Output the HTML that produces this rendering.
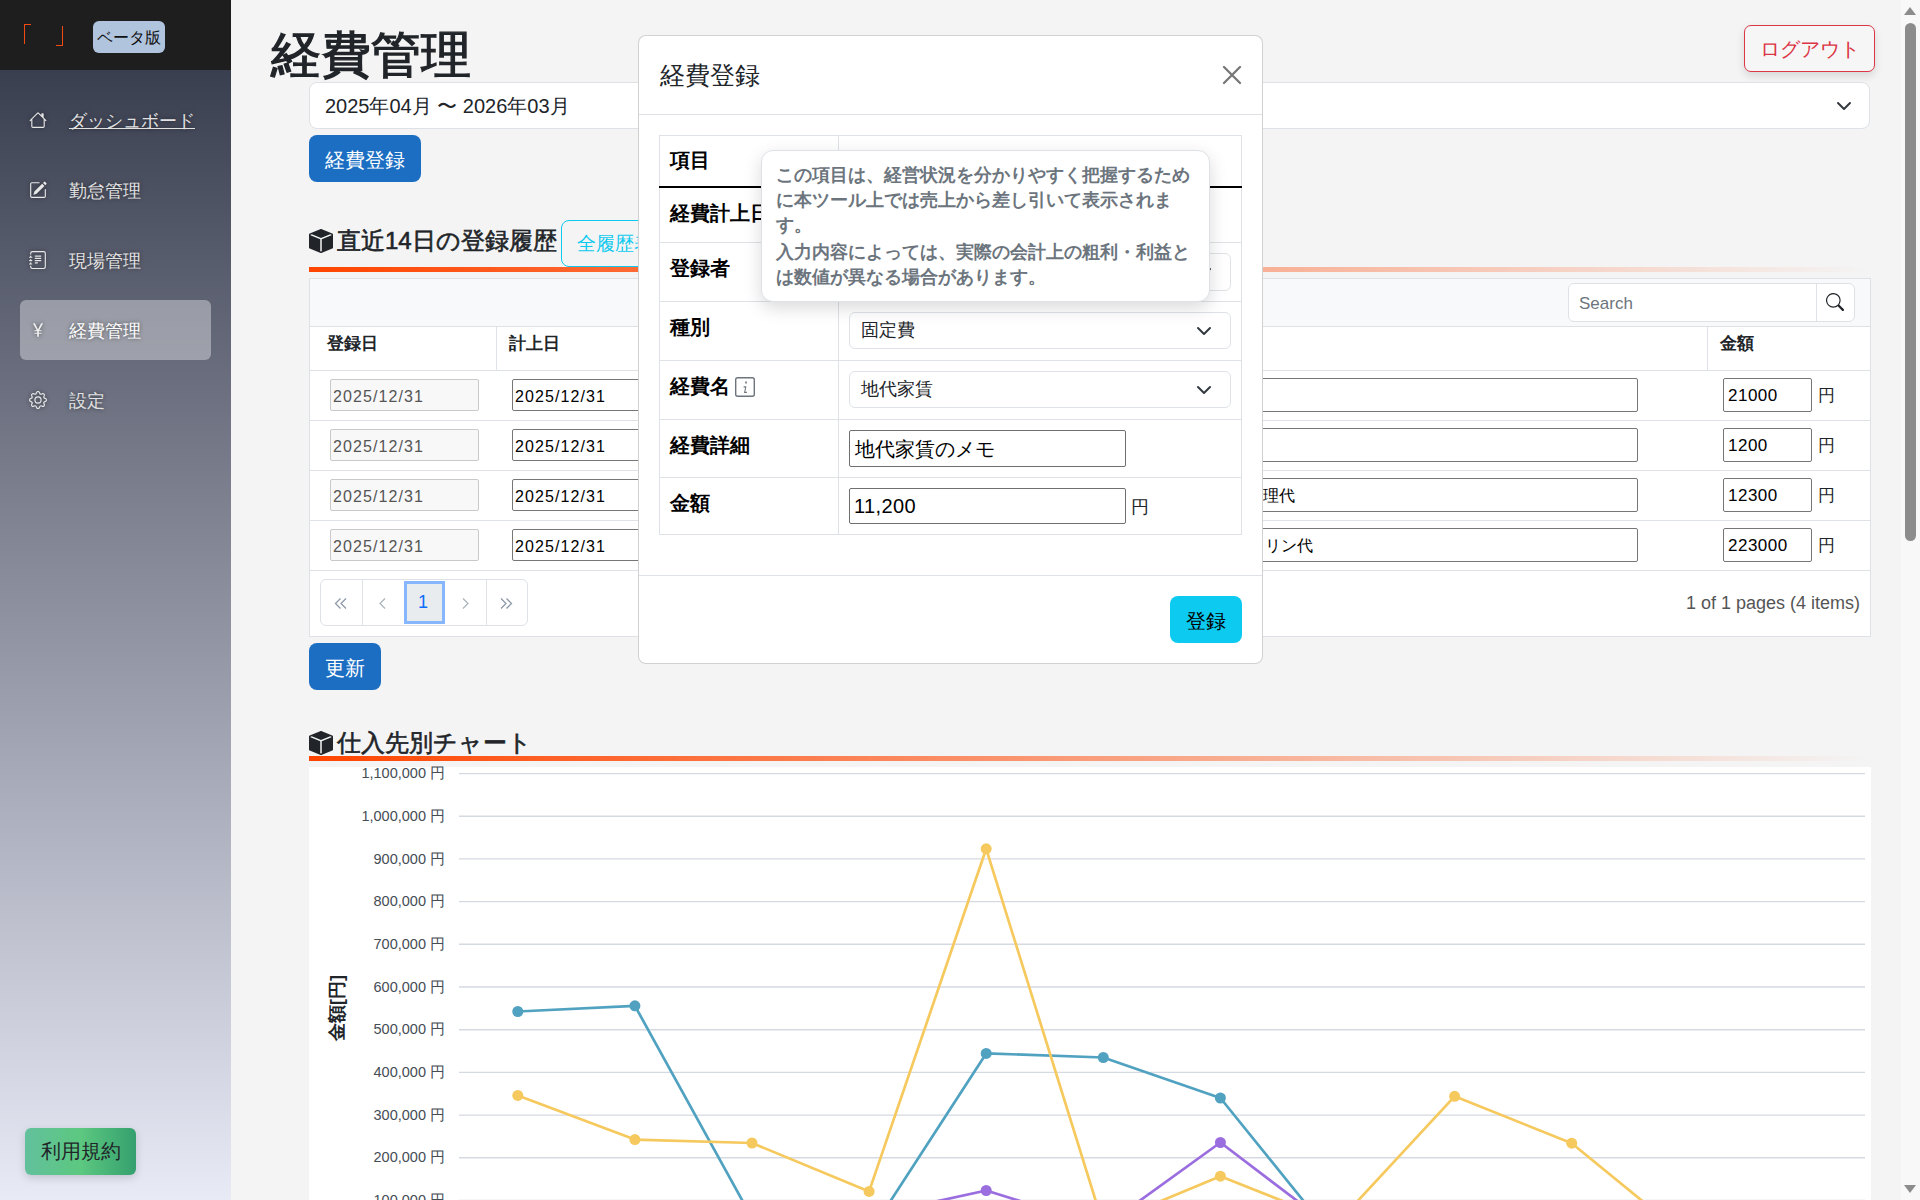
<!DOCTYPE html>
<html lang="ja"><head><meta charset="utf-8"><title>経費管理</title>
<style>
*{box-sizing:border-box}
html,body{margin:0;padding:0;width:1920px;height:1200px;overflow:hidden}
body{font-family:"Liberation Sans",sans-serif;background:#f4f4f4;color:#212529;position:relative}
.a{position:absolute}
.side{left:0;top:0;width:231px;height:1200px;background:linear-gradient(180deg,#3a3f50 70px,#e8eaf6 1200px)}
.brand{left:0;top:0;width:231px;height:70px;background:#1e1e1e}
.nav{left:69px;font-size:18px;line-height:20px;color:#e2e2e2;text-shadow:0 0 4px rgba(0,0,0,.55);white-space:nowrap}
.navi{left:29px;width:18px;height:18px;line-height:0;filter:drop-shadow(0 0 2px rgba(0,0,0,.5))}
.t16{font-size:16px;line-height:20px;white-space:nowrap}
.inp{height:32px;border:1px solid #767676;border-radius:2px;background:#fff;font-size:16px;line-height:30px;padding-left:3px;white-space:nowrap;overflow:hidden;color:#000}
.dis{background:#f8f8f8;border-color:#c9c9c9;color:#555}
.rowline{left:310px;width:1560px;height:1px;background:#dee2e6}
.mtl{left:659px;width:583px;height:1px;background:#dee2e6}
.lab{left:670px;font-size:20px;line-height:22px;font-weight:bold;color:#000;white-space:nowrap}
.sel{height:37px;border:1px solid #dee2e6;border-radius:6px;background:#fff;font-size:17.5px;line-height:35px;padding-left:11px;white-space:nowrap;color:#212529}
.sel span{position:absolute;right:18px;top:10px;width:16px;height:16px;line-height:0}
</style></head><body>

<!-- Sidebar -->
<div class="a side"></div>
<div class="a brand"></div>
<div class="a" style="left:24px;top:24px;width:7px;height:20px;border-left:1.7px solid #f24a12;border-top:1.7px solid #f24a12"></div>
<div class="a" style="left:56px;top:26px;width:7px;height:20px;border-right:1.7px solid #f24a12;border-bottom:1.7px solid #f24a12"></div>
<div class="a" style="left:93px;top:21px;width:72px;height:32px;background:#b0c4de;border-radius:6px;font-size:16px;line-height:34px;text-align:center;color:#111">ベータ版</div>

<div class="a navi" style="top:111px"><svg width="18" height="18" viewBox="0 0 16 16" fill="#e8e8e8"><path d="M8.707 1.5a1 1 0 0 0-1.414 0L.646 8.146a.5.5 0 0 0 .708.708L2 8.207V13.5A1.5 1.5 0 0 0 3.5 15h9a1.5 1.5 0 0 0 1.5-1.5V8.207l.646.647a.5.5 0 0 0 .708-.708L13 5.793V2.5a.5.5 0 0 0-.5-.5h-1a.5.5 0 0 0-.5.5v1.293zM13 7.207V13.5a.5.5 0 0 1-.5.5h-9a.5.5 0 0 1-.5-.5V7.207l5-5z"/></svg></div>
<div class="a nav" style="top:111px;text-decoration:underline">ダッシュボード</div>
<div class="a navi" style="top:181px"><svg width="18" height="18" viewBox="0 0 16 16" fill="#e8e8e8"><path d="M15.502 1.94a.5.5 0 0 1 0 .706L14.459 3.69l-2-2L13.502.646a.5.5 0 0 1 .707 0l1.293 1.293zm-1.75 2.456-2-2L4.939 9.21a.5.5 0 0 0-.121.196l-.805 2.414a.25.25 0 0 0 .316.316l2.414-.805a.5.5 0 0 0 .196-.12l6.813-6.814z"/><path d="M1 13.5A1.5 1.5 0 0 0 2.5 15h11a1.5 1.5 0 0 0 1.5-1.5v-6a.5.5 0 0 0-1 0v6a.5.5 0 0 1-.5.5h-11a.5.5 0 0 1-.5-.5v-11a.5.5 0 0 1 .5-.5H9a.5.5 0 0 0 0-1H2.5A1.5 1.5 0 0 0 1 2.5z"/></svg></div>
<div class="a nav" style="top:181px">勤怠管理</div>
<div class="a navi" style="top:251px"><svg width="18" height="18" viewBox="0 0 16 16" fill="#e8e8e8"><path d="M5 10.5a.5.5 0 0 1 .5-.5h2a.5.5 0 0 1 0 1h-2a.5.5 0 0 1-.5-.5m0-2a.5.5 0 0 1 .5-.5h5a.5.5 0 0 1 0 1h-5a.5.5 0 0 1-.5-.5m0-2a.5.5 0 0 1 .5-.5h5a.5.5 0 0 1 0 1h-5a.5.5 0 0 1-.5-.5m0-2a.5.5 0 0 1 .5-.5h5a.5.5 0 0 1 0 1h-5a.5.5 0 0 1-.5-.5"/><path d="M3 0h10a2 2 0 0 1 2 2v12a2 2 0 0 1-2 2H3a2 2 0 0 1-2-2v-1h1v1a1 1 0 0 0 1 1h10a1 1 0 0 0 1-1V2a1 1 0 0 0-1-1H3a1 1 0 0 0-1 1v1H1V2a2 2 0 0 1 2-2"/><path d="M1 5v-.5a.5.5 0 0 1 1 0V5h.5a.5.5 0 0 1 0 1h-2a.5.5 0 0 1 0-1zm0 3v-.5a.5.5 0 0 1 1 0V8h.5a.5.5 0 0 1 0 1h-2a.5.5 0 0 1 0-1zm0 3v-.5a.5.5 0 0 1 1 0v.5h.5a.5.5 0 0 1 0 1h-2a.5.5 0 0 1 0-1z"/></svg></div>
<div class="a nav" style="top:251px">現場管理</div>
<div class="a" style="left:20px;top:300px;width:191px;height:60px;border-radius:6px;background:rgba(255,255,255,.37)"></div>
<div class="a navi" style="top:321px"><svg width="18" height="18" viewBox="0 0 16 16" fill="#f0f0f0"><path d="M8.75 14v-2.629h2.446v-.967H8.75v-1.31h2.445v-.967H9.128L12.5 2h-1.699L8.047 7.327h-.086L5.207 2H3.5l3.363 6.127H4.778v.968H7.25v1.31H4.78v.966h2.47V14z"/></svg></div>
<div class="a nav" style="top:321px;color:#fff">経費管理</div>
<div class="a navi" style="top:391px"><svg width="18" height="18" viewBox="0 0 16 16" fill="#e8e8e8"><path d="M8 4.754a3.246 3.246 0 1 0 0 6.492 3.246 3.246 0 0 0 0-6.492M5.754 8a2.246 2.246 0 1 1 4.492 0 2.246 2.246 0 0 1-4.492 0"/><path d="M9.796 1.343c-.527-1.79-3.065-1.79-3.592 0l-.094.319a.873.873 0 0 1-1.255.52l-.292-.16c-1.64-.892-3.433.902-2.54 2.541l.159.292a.873.873 0 0 1-.52 1.255l-.319.094c-1.79.527-1.790 3.065 0 3.592l.319.094a.873.873 0 0 1 .52 1.255l-.16.292c-.892 1.64.901 3.434 2.541 2.54l.292-.159a.873.873 0 0 1 1.255.52l.094.319c.527 1.79 3.065 1.79 3.592 0l.094-.319a.873.873 0 0 1 1.255-.52l.292.16c1.64.893 3.434-.902 2.54-2.541l-.159-.292a.873.873 0 0 1 .52-1.255l.319-.094c1.79-.527 1.79-3.065 0-3.592l-.319-.094a.873.873 0 0 1-.52-1.255l.16-.292c.893-1.64-.902-3.433-2.541-2.54l-.292.159a.873.873 0 0 1-1.255-.52zm-2.633.283c.246-.835 1.428-.835 1.674 0l.094.319a1.873 1.873 0 0 0 2.693 1.115l.291-.16c.764-.415 1.6.42 1.184 1.185l-.159.292a1.873 1.873 0 0 0 1.116 2.692l.318.094c.835.246.835 1.428 0 1.674l-.319.094a1.873 1.873 0 0 0-1.115 2.693l.16.291c.415.764-.42 1.6-1.185 1.184l-.291-.159a1.873 1.873 0 0 0-2.693 1.116l-.094.318c-.246.835-1.428.835-1.674 0l-.094-.319a1.873 1.873 0 0 0-2.692-1.115l-.292.16c-.764.415-1.6-.42-1.184-1.185l.159-.291A1.873 1.873 0 0 0 1.945 8.93l-.319-.094c-.835-.246-.835-1.428 0-1.674l.319-.094A1.873 1.873 0 0 0 3.06 4.377l-.16-.292c-.415-.764.42-1.6 1.185-1.184l.292.159a1.873 1.873 0 0 0 2.692-1.115z"/></svg></div>
<div class="a nav" style="top:391px">設定</div>

<div class="a" style="left:25px;top:1128px;width:111px;height:47px;border-radius:6px;background:linear-gradient(90deg,#62c09c,#5cc880 50%,#35a06e);box-shadow:0 3px 8px rgba(0,0,0,.15);font-size:20px;line-height:47px;text-align:center;color:#212529">利用規約</div>

<!-- Main -->
<div class="a" style="left:271px;top:26px;font-size:50px;line-height:58px;white-space:nowrap;color:#212529;-webkit-text-stroke:1.3px #212529">経費管理</div>
<div class="a" style="left:1744px;top:25px;width:131px;height:47px;border:1px solid #dc3545;border-radius:7px;color:#dc3545;font-size:20px;line-height:47px;text-align:center;box-shadow:0 4px 8px rgba(0,0,0,.12);background:#f6f6f6">ログアウト</div>

<div class="a" style="left:309px;top:82px;width:1561px;height:47px;background:#fff;border:1px solid #dee2e6;border-radius:8px;font-size:20px;line-height:47px;padding-left:15px;white-space:nowrap">2025年04月 〜 2026年03月<span class="a" style="right:17px;top:15px;line-height:0"><svg width="16" height="16" viewBox="0 0 16 16"><path d="M2 5l6 6 6-6" fill="none" stroke="#343a40" stroke-width="2" stroke-linecap="round" stroke-linejoin="round"/></svg></span></div>
<div class="a" style="left:309px;top:135px;width:112px;height:47px;background:#1b6ec2;border-radius:8px;color:#fff;font-size:20px;line-height:50px;text-align:center">経費登録</div>

<div class="a" style="left:309px;top:229px"><svg width="24" height="24" viewBox="0 0 16 16" fill="#212529"><path d="M15.528 2.973a.75.75 0 0 1 .472.696v8.662a.75.75 0 0 1-.472.696l-7.25 2.9a.75.75 0 0 1-.557 0l-7.25-2.9A.75.75 0 0 1 0 12.331V3.669a.75.75 0 0 1 .471-.696L7.443.184l.004-.001.274-.11a.75.75 0 0 1 .558 0l.274.11.004.001zm-1.374.527L8 5.962 1.846 3.5 1 3.839v.4l6.5 2.6v7.922l.5.2.5-.2V6.84l6.5-2.6v-.4l-.846-.339Z"/></svg></div>
<div class="a" style="left:337px;top:226px;font-size:24px;line-height:30px;white-space:nowrap;-webkit-text-stroke:.6px #212529">直近14日の登録履歴</div>
<div class="a" style="left:561px;top:220px;width:120px;height:47px;border:1px solid #0dcaf0;border-radius:8px;color:#0dcaf0;font-size:19px;line-height:45px;padding-left:15px;white-space:nowrap">全履歴表示</div>
<div class="a" style="left:309px;top:267px;width:1561px;height:5px;background:linear-gradient(90deg,#ff4500,rgba(255,69,0,.0))"></div>

<!-- table -->
<div class="a" style="left:309px;top:278px;width:1562px;height:359px;background:#fff;border:1px solid #dee2e6"></div>
<div class="a" style="left:310px;top:279px;width:1560px;height:48px;background:#f8f9fa;border-bottom:1px solid #dee2e6"></div>
<div class="a" style="left:1568px;top:283px;width:287px;height:39px;border:1px solid #dee2e6;border-radius:6px;background:#fff"></div>
<div class="a" style="left:1816px;top:284px;width:1px;height:37px;background:#dee2e6"></div>
<div class="a" style="left:1579px;top:293px;font-size:17px;line-height:22px;color:#6c757d">Search</div>
<div class="a" style="left:1826px;top:293px"><svg width="18" height="18" viewBox="0 0 16 16" fill="#212529"><path d="M11.742 10.344a6.5 6.5 0 1 0-1.397 1.398h-.001q.044.06.098.115l3.85 3.85a1 1 0 0 0 1.415-1.414l-3.85-3.85a1 1 0 0 0-.115-.1zM12 6.5a5.5 5.5 0 1 1-11 0 5.5 5.5 0 0 1 11 0"/></svg></div>
<div class="a t16" style="left:327px;top:334px;font-weight:bold;font-size:17px">登録日</div>
<div class="a t16" style="left:509px;top:334px;font-weight:bold;font-size:17px">計上日</div>
<div class="a t16" style="left:1720px;top:334px;font-weight:bold;font-size:17px">金額</div>
<div class="a" style="left:496px;top:327px;width:1px;height:43px;background:#dee2e6"></div>
<div class="a" style="left:1707px;top:327px;width:1px;height:43px;background:#dee2e6"></div>
<div class="a rowline" style="top:370px"></div>
<div class="a rowline" style="top:420px"></div>
<div class="a inp dis" style="left:330px;top:379px;width:149px;letter-spacing:1.1px;line-height:33px;padding-left:2px">2025/12/31</div>
<div class="a inp" style="left:512px;top:379px;width:200px;letter-spacing:1.1px;line-height:33px;padding-left:2px">2025/12/31</div>
<div class="a inp" style="left:1100px;top:378px;width:538px;height:34px"></div>
<div class="a t16" style="left:-400px;top:386px;width:400px;text-align:right;color:#000"></div>
<div class="a inp" style="left:1723px;top:378px;width:89px;height:34px;line-height:34px;letter-spacing:.5px;font-size:17px;padding-left:4px">21000</div>
<div class="a t16" style="left:1818px;top:386px;font-size:17px">円</div>
<div class="a rowline" style="top:470px"></div>
<div class="a inp dis" style="left:330px;top:429px;width:149px;letter-spacing:1.1px;line-height:33px;padding-left:2px">2025/12/31</div>
<div class="a inp" style="left:512px;top:429px;width:200px;letter-spacing:1.1px;line-height:33px;padding-left:2px">2025/12/31</div>
<div class="a inp" style="left:1100px;top:428px;width:538px;height:34px"></div>
<div class="a t16" style="left:-400px;top:436px;width:400px;text-align:right;color:#000"></div>
<div class="a inp" style="left:1723px;top:428px;width:89px;height:34px;line-height:34px;letter-spacing:.5px;font-size:17px;padding-left:4px">1200</div>
<div class="a t16" style="left:1818px;top:436px;font-size:17px">円</div>
<div class="a rowline" style="top:520px"></div>
<div class="a inp dis" style="left:330px;top:479px;width:149px;letter-spacing:1.1px;line-height:33px;padding-left:2px">2025/12/31</div>
<div class="a inp" style="left:512px;top:479px;width:200px;letter-spacing:1.1px;line-height:33px;padding-left:2px">2025/12/31</div>
<div class="a inp" style="left:1100px;top:478px;width:538px;height:34px"></div>
<div class="a t16" style="left:895px;top:486px;width:400px;text-align:right;color:#000">修理代</div>
<div class="a inp" style="left:1723px;top:478px;width:89px;height:34px;line-height:34px;letter-spacing:.5px;font-size:17px;padding-left:4px">12300</div>
<div class="a t16" style="left:1818px;top:486px;font-size:17px">円</div>
<div class="a rowline" style="top:570px"></div>
<div class="a inp dis" style="left:330px;top:529px;width:149px;letter-spacing:1.1px;line-height:33px;padding-left:2px">2025/12/31</div>
<div class="a inp" style="left:512px;top:529px;width:200px;letter-spacing:1.1px;line-height:33px;padding-left:2px">2025/12/31</div>
<div class="a inp" style="left:1100px;top:528px;width:538px;height:34px"></div>
<div class="a t16" style="left:913px;top:536px;width:400px;text-align:right;color:#000">ガソリン代</div>
<div class="a inp" style="left:1723px;top:528px;width:89px;height:34px;line-height:34px;letter-spacing:.5px;font-size:17px;padding-left:4px">223000</div>
<div class="a t16" style="left:1818px;top:536px;font-size:17px">円</div>

<!-- pagination -->
<div class="a" style="left:320px;top:579px;width:208px;height:47px;border:1px solid #dee2e6;border-radius:6px;background:#fff"></div>
<div class="a" style="left:362px;top:580px;width:1px;height:45px;background:#dee2e6"></div>
<div class="a" style="left:486px;top:580px;width:1px;height:45px;background:#dee2e6"></div>
<div class="a" style="left:404px;top:581px;width:41px;height:43px;background:#e9ecef;border:3px solid #86b7fe"></div>
<svg class="a" style="left:330px;top:594px" width="200" height="20" viewBox="330 594 200 20">
<path d="M340.5 598.5L335.5 603.5L340.5 608.5M346 598.5L341 603.5L346 608.5" fill="none" stroke="#8e99a6" stroke-width="1.3"/>
<path d="M385 598.5L380 603.5L385 608.5" fill="none" stroke="#aab3bd" stroke-width="1.2"/>
<path d="M463 598.5L468 603.5L463 608.5" fill="none" stroke="#aab3bd" stroke-width="1.2"/>
<path d="M501 598.5L506 603.5L501 608.5M506.5 598.5L511.5 603.5L506.5 608.5" fill="none" stroke="#8e99a6" stroke-width="1.3"/>
</svg>
<div class="a" style="left:413px;top:592px;width:20px;text-align:center;font-size:18px;line-height:20px;color:#0d6efd">1</div>
<div class="a" style="left:1600px;top:592px;width:1260px;text-align:right;font-size:18px;line-height:22px;color:#555;white-space:nowrap;left:600px">1 of 1 pages (4 items)</div>

<div class="a" style="left:309px;top:643px;width:72px;height:47px;background:#1b6ec2;border-radius:8px;color:#fff;font-size:20px;line-height:50px;text-align:center">更新</div>

<div class="a" style="left:309px;top:731px"><svg width="24" height="24" viewBox="0 0 16 16" fill="#212529"><path d="M15.528 2.973a.75.75 0 0 1 .472.696v8.662a.75.75 0 0 1-.472.696l-7.25 2.9a.75.75 0 0 1-.557 0l-7.25-2.9A.75.75 0 0 1 0 12.331V3.669a.75.75 0 0 1 .471-.696L7.443.184l.004-.001.274-.11a.75.75 0 0 1 .558 0l.274.11.004.001zm-1.374.527L8 5.962 1.846 3.5 1 3.839v.4l6.5 2.6v7.922l.5.2.5-.2V6.84l6.5-2.6v-.4l-.846-.339Z"/></svg></div>
<div class="a" style="left:337px;top:728px;font-size:24px;line-height:30px;white-space:nowrap;-webkit-text-stroke:.6px #212529">仕入先別チャート</div>
<div class="a" style="left:309px;top:756px;width:1561px;height:5px;background:linear-gradient(90deg,#ff4500,rgba(255,69,0,0))"></div>

<svg class="a" style="left:0;top:0" width="1920" height="1200" viewBox="0 0 1920 1200">
<rect x="309" y="767" width="1562" height="440" fill="#fff"/>
<line x1="459" y1="1200.5" x2="1865" y2="1200.5" stroke="#d5dae2" stroke-width="1.4"/><line x1="459" y1="1157.8" x2="1865" y2="1157.8" stroke="#d5dae2" stroke-width="1.4"/><line x1="459" y1="1115.1" x2="1865" y2="1115.1" stroke="#d5dae2" stroke-width="1.4"/><line x1="459" y1="1072.4" x2="1865" y2="1072.4" stroke="#d5dae2" stroke-width="1.4"/><line x1="459" y1="1029.7" x2="1865" y2="1029.7" stroke="#d5dae2" stroke-width="1.4"/><line x1="459" y1="987.0" x2="1865" y2="987.0" stroke="#d5dae2" stroke-width="1.4"/><line x1="459" y1="944.3" x2="1865" y2="944.3" stroke="#d5dae2" stroke-width="1.4"/><line x1="459" y1="901.6" x2="1865" y2="901.6" stroke="#d5dae2" stroke-width="1.4"/><line x1="459" y1="858.9" x2="1865" y2="858.9" stroke="#d5dae2" stroke-width="1.4"/><line x1="459" y1="816.2" x2="1865" y2="816.2" stroke="#d5dae2" stroke-width="1.4"/><line x1="459" y1="773.6" x2="1865" y2="773.6" stroke="#d5dae2" stroke-width="1.4"/>
<g font-family="Liberation Sans, sans-serif" font-size="14.5" fill="#454d55"><text x="445" y="1205.1" text-anchor="end">100,000 円</text><text x="445" y="1162.4" text-anchor="end">200,000 円</text><text x="445" y="1119.7" text-anchor="end">300,000 円</text><text x="445" y="1077.0" text-anchor="end">400,000 円</text><text x="445" y="1034.3" text-anchor="end">500,000 円</text><text x="445" y="991.6" text-anchor="end">600,000 円</text><text x="445" y="948.9" text-anchor="end">700,000 円</text><text x="445" y="906.2" text-anchor="end">800,000 円</text><text x="445" y="863.5" text-anchor="end">900,000 円</text><text x="445" y="820.9" text-anchor="end">1,000,000 円</text><text x="445" y="778.2" text-anchor="end">1,100,000 円</text></g>
<text transform="translate(343,1008) rotate(-90)" text-anchor="middle" font-family="Liberation Sans, sans-serif" font-size="18" font-weight="bold" fill="#212529">金額[円]</text>
<polyline points="517.8,1011.5 634.9,1005.8 752.0,1218.0 869.1,1234.0 986.2,1053.4 1103.3,1057.5 1220.4,1098.0 1337.5,1243.0 1454.6,1243.0 1571.7,1243.0 1688.8,1243.0 1805.9,1243.0" fill="none" stroke="#50a2c0" stroke-width="2.7" stroke-linejoin="round"/><circle cx="517.8" cy="1011.5" r="5.5" fill="#50a2c0"/><circle cx="634.9" cy="1005.8" r="5.5" fill="#50a2c0"/><circle cx="752.0" cy="1218.0" r="5.5" fill="#50a2c0"/><circle cx="869.1" cy="1234.0" r="5.5" fill="#50a2c0"/><circle cx="986.2" cy="1053.4" r="5.5" fill="#50a2c0"/><circle cx="1103.3" cy="1057.5" r="5.5" fill="#50a2c0"/><circle cx="1220.4" cy="1098.0" r="5.5" fill="#50a2c0"/><circle cx="1337.5" cy="1243.0" r="5.5" fill="#50a2c0"/><circle cx="1454.6" cy="1243.0" r="5.5" fill="#50a2c0"/><circle cx="1571.7" cy="1243.0" r="5.5" fill="#50a2c0"/><circle cx="1688.8" cy="1243.0" r="5.5" fill="#50a2c0"/><circle cx="1805.9" cy="1243.0" r="5.5" fill="#50a2c0"/>
<polyline points="517.8,1095.4 634.9,1139.6 752.0,1143.0 869.1,1191.4 986.2,848.8 1103.3,1225.0 1220.4,1176.2 1337.5,1222.8 1454.6,1096.3 1571.7,1143.2 1688.8,1239.0 1805.9,1243.0" fill="none" stroke="#f6c95e" stroke-width="2.7" stroke-linejoin="round"/><circle cx="517.8" cy="1095.4" r="5.5" fill="#f6c95e"/><circle cx="634.9" cy="1139.6" r="5.5" fill="#f6c95e"/><circle cx="752.0" cy="1143.0" r="5.5" fill="#f6c95e"/><circle cx="869.1" cy="1191.4" r="5.5" fill="#f6c95e"/><circle cx="986.2" cy="848.8" r="5.5" fill="#f6c95e"/><circle cx="1103.3" cy="1225.0" r="5.5" fill="#f6c95e"/><circle cx="1220.4" cy="1176.2" r="5.5" fill="#f6c95e"/><circle cx="1337.5" cy="1222.8" r="5.5" fill="#f6c95e"/><circle cx="1454.6" cy="1096.3" r="5.5" fill="#f6c95e"/><circle cx="1571.7" cy="1143.2" r="5.5" fill="#f6c95e"/><circle cx="1688.8" cy="1239.0" r="5.5" fill="#f6c95e"/><circle cx="1805.9" cy="1243.0" r="5.5" fill="#f6c95e"/>
<polyline points="517.8,1243.0 634.9,1243.0 752.0,1243.0 869.1,1216.0 986.2,1190.5 1103.3,1227.0 1220.4,1142.5 1337.5,1231.5 1454.6,1243.0 1571.7,1243.0 1688.8,1243.0 1805.9,1243.0" fill="none" stroke="#9b6ee0" stroke-width="2.7" stroke-linejoin="round"/><circle cx="517.8" cy="1243.0" r="5.5" fill="#9b6ee0"/><circle cx="634.9" cy="1243.0" r="5.5" fill="#9b6ee0"/><circle cx="752.0" cy="1243.0" r="5.5" fill="#9b6ee0"/><circle cx="869.1" cy="1216.0" r="5.5" fill="#9b6ee0"/><circle cx="986.2" cy="1190.5" r="5.5" fill="#9b6ee0"/><circle cx="1103.3" cy="1227.0" r="5.5" fill="#9b6ee0"/><circle cx="1220.4" cy="1142.5" r="5.5" fill="#9b6ee0"/><circle cx="1337.5" cy="1231.5" r="5.5" fill="#9b6ee0"/><circle cx="1454.6" cy="1243.0" r="5.5" fill="#9b6ee0"/><circle cx="1571.7" cy="1243.0" r="5.5" fill="#9b6ee0"/><circle cx="1688.8" cy="1243.0" r="5.5" fill="#9b6ee0"/><circle cx="1805.9" cy="1243.0" r="5.5" fill="#9b6ee0"/>
</svg>

<!-- scrollbar -->
<div class="a" style="left:1901px;top:0;width:19px;height:1200px;background:#f8f8f8"></div>
<div class="a" style="left:1905px;top:23px;width:11px;height:518px;border-radius:6px;background:#8c8c8c"></div>
<div class="a" style="left:1904px;top:7px;width:0;height:0;border-left:6px solid transparent;border-right:6px solid transparent;border-bottom:8px solid #8c8c8c"></div>
<div class="a" style="left:1904px;top:1185px;width:0;height:0;border-left:6px solid transparent;border-right:6px solid transparent;border-top:8px solid #8c8c8c"></div>

<!-- Modal -->
<div class="a" style="left:638px;top:35px;width:625px;height:629px;background:#fff;border:1px solid rgba(0,0,0,.18);border-radius:8px"></div>
<div class="a" style="left:660px;top:60px;font-size:25px;line-height:30px;white-space:nowrap;color:#212529">経費登録</div>
<svg class="a" style="left:1222px;top:65px" width="20" height="20" viewBox="0 0 20 20"><path d="M2 2L18 18M18 2L2 18" stroke="#777" stroke-width="2.3" stroke-linecap="round"/></svg>
<div class="a" style="left:639px;top:114px;width:623px;height:1px;background:#dee2e6"></div>
<div class="a" style="left:639px;top:575px;width:623px;height:1px;background:#dee2e6"></div>

<div class="a" style="left:659px;top:135px;width:583px;height:400px;border:1px solid #dee2e6"></div>
<div class="a" style="left:838px;top:136px;width:1px;height:398px;background:#dee2e6"></div>
<div class="a" style="left:659px;top:186px;width:583px;height:2px;background:#000"></div>
<div class="a mtl" style="top:242px"></div>
<div class="a mtl" style="top:301px"></div>
<div class="a mtl" style="top:360px"></div>
<div class="a mtl" style="top:419px"></div>
<div class="a mtl" style="top:477px"></div>
<div class="a lab" style="top:149px">項目</div>
<div class="a lab" style="top:202px">経費計上日</div>
<div class="a lab" style="top:257px">登録者</div>
<div class="a lab" style="top:316px">種別</div>
<div class="a lab" style="top:375px">経費名</div>
<svg class="a" style="left:733px;top:375px" width="24" height="24" viewBox="733 375 24 24"><rect x="735.7" y="377.7" width="18.6" height="18.6" rx="2" fill="none" stroke="#6c757d" stroke-width="1.4"/><path d="M745.2 381.5h1.6v2h-1.6zM743.6 386.2h2.8l-1.1 5.6h1.6v1.2h-2.9l1.1-5.6h-1.5z" fill="#6c757d"/></svg>
<div class="a lab" style="top:434px">経費詳細</div>
<div class="a lab" style="top:492px">金額</div>

<div class="a sel" style="left:849px;top:253px;width:382px;height:38px">山田 太郎<span><svg width="16" height="16" viewBox="0 0 16 16"><path d="M2 5l6 6 6-6" fill="none" stroke="#343a40" stroke-width="2" stroke-linecap="round" stroke-linejoin="round"/></svg></span></div>
<div class="a sel" style="left:849px;top:312px;width:382px">固定費<span><svg width="16" height="16" viewBox="0 0 16 16"><path d="M2 5l6 6 6-6" fill="none" stroke="#343a40" stroke-width="2" stroke-linecap="round" stroke-linejoin="round"/></svg></span></div>
<div class="a sel" style="left:849px;top:371px;width:382px">地代家賃<span><svg width="16" height="16" viewBox="0 0 16 16"><path d="M2 5l6 6 6-6" fill="none" stroke="#343a40" stroke-width="2" stroke-linecap="round" stroke-linejoin="round"/></svg></span></div>
<div class="a inp" style="left:849px;top:430px;width:277px;height:37px;line-height:37px;font-size:20px;padding-left:5px;border-color:#6f6f6f">地代家賃のメモ</div>
<div class="a inp" style="left:849px;top:488px;width:277px;height:36px;line-height:34px;font-size:20px;padding-left:4px;border-color:#6f6f6f;letter-spacing:.4px">11,200</div>
<div class="a" style="left:1131px;top:496px;font-size:18px;line-height:22px">円</div>
<div class="a" style="left:1170px;top:596px;width:72px;height:47px;background:#0dcaf0;border-radius:8px;color:#000;font-size:20px;line-height:50px;text-align:center">登録</div>

<!-- Tooltip -->
<div class="a" style="left:761px;top:150px;width:449px;height:152px;background:#fff;border:1px solid #dee2e6;border-radius:12px;box-shadow:0 6px 18px rgba(0,0,0,.15);padding:12px 0 0 14px;font-size:18px;line-height:25px;color:#6c757d;font-weight:bold;white-space:nowrap">この項目は、経営状況を分かりやすく把握するため<br>に本ツール上では売上から差し引いて表示されま<br>す。<br><div style="margin-top:2px">入力内容によっては、実際の会計上の粗利・利益と<br>は数値が異なる場合があります。</div></div>

</body></html>
